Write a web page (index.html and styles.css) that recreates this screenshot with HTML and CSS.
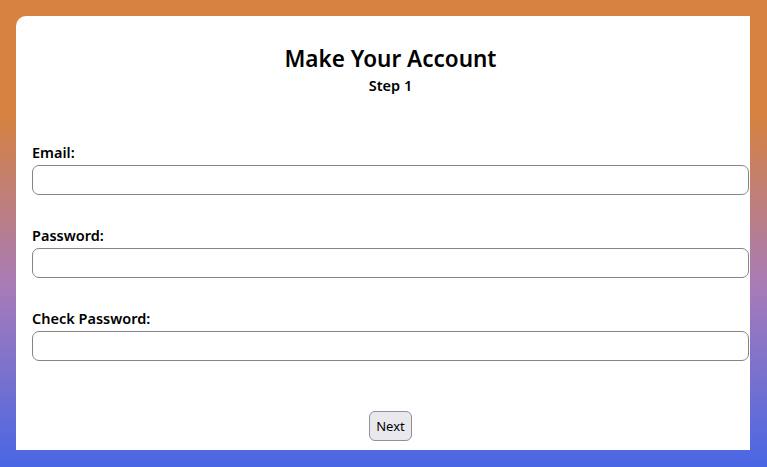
FILE: index.html
```html
<!DOCTYPE html>
<html>
<head>
<meta charset="utf-8">
<link rel="stylesheet" href="styles.css">
</head>
<body>
<div class="card">
  <div class="header">
    <h1 class="title">Make Your Account</h1>
    <div class="step">Step 1</div>
  </div>
  <form class="form">
    <div class="field">
      <label class="label">Email:</label>
      <input class="input" type="text">
    </div>
    <div class="field">
      <label class="label">Password:</label>
      <input class="input" type="password">
    </div>
    <div class="field">
      <label class="label">Check Password:</label>
      <input class="input" type="password">
    </div>
    <div class="actions">
      <button class="btn" type="button">Next</button>
    </div>
  </form>
</div>
</body>
</html>
```
FILE: styles.css
```css
html, body {
  margin: 0;
  height: 100%;
}
body {
  background: linear-gradient(180deg, #d7823e 0%, #d7823e 24%, #a67bb9 62%, #4966e4 100%);
  padding: 16px 17px 17px 16px;
  box-sizing: border-box;
  font-family: "Noto Sans", "Open Sans", sans-serif;
  color: #000;
}
.card {
  background: #fff;
  width: 734px;
  height: 434px;
  box-sizing: border-box;
  border-top-left-radius: 10px;
  padding: 0 1px 0 16px;
  display: flex;
  flex-direction: column;
}
.header {
  text-align: center;
  padding-top: 27px;
}
.title {
  margin: 0;
  font-size: 22.5px;
  font-weight: 600;
  line-height: 32px;
}
.step {
  font-size: 14.5px;
  font-weight: 600;
  line-height: 20px;
}
.form {
  margin-top: 47px;
  display: flex;
  flex-direction: column;
  gap: 30px;
}
.field {
  display: flex;
  flex-direction: column;
}
.label {
  font-size: 14.5px;
  font-weight: 600;
  line-height: 20px;
  margin-bottom: 3px;
}
.input {
  box-sizing: border-box;
  width: 100%;
  height: 30px;
  margin: 0;
  border: 1px solid #858585;
  border-radius: 7px;
  background: #fff;
}
.actions {
  display: flex;
  justify-content: center;
  margin-top: 20px;
}
.btn {
  font-family: "Noto Sans", "Open Sans", sans-serif;
  font-size: 13px;
  height: 30px;
  padding: 0 6px;
  background: #e9e9ed;
  border: 1px solid #8f8f9d;
  border-radius: 6px;
  color: #000;
}
```
